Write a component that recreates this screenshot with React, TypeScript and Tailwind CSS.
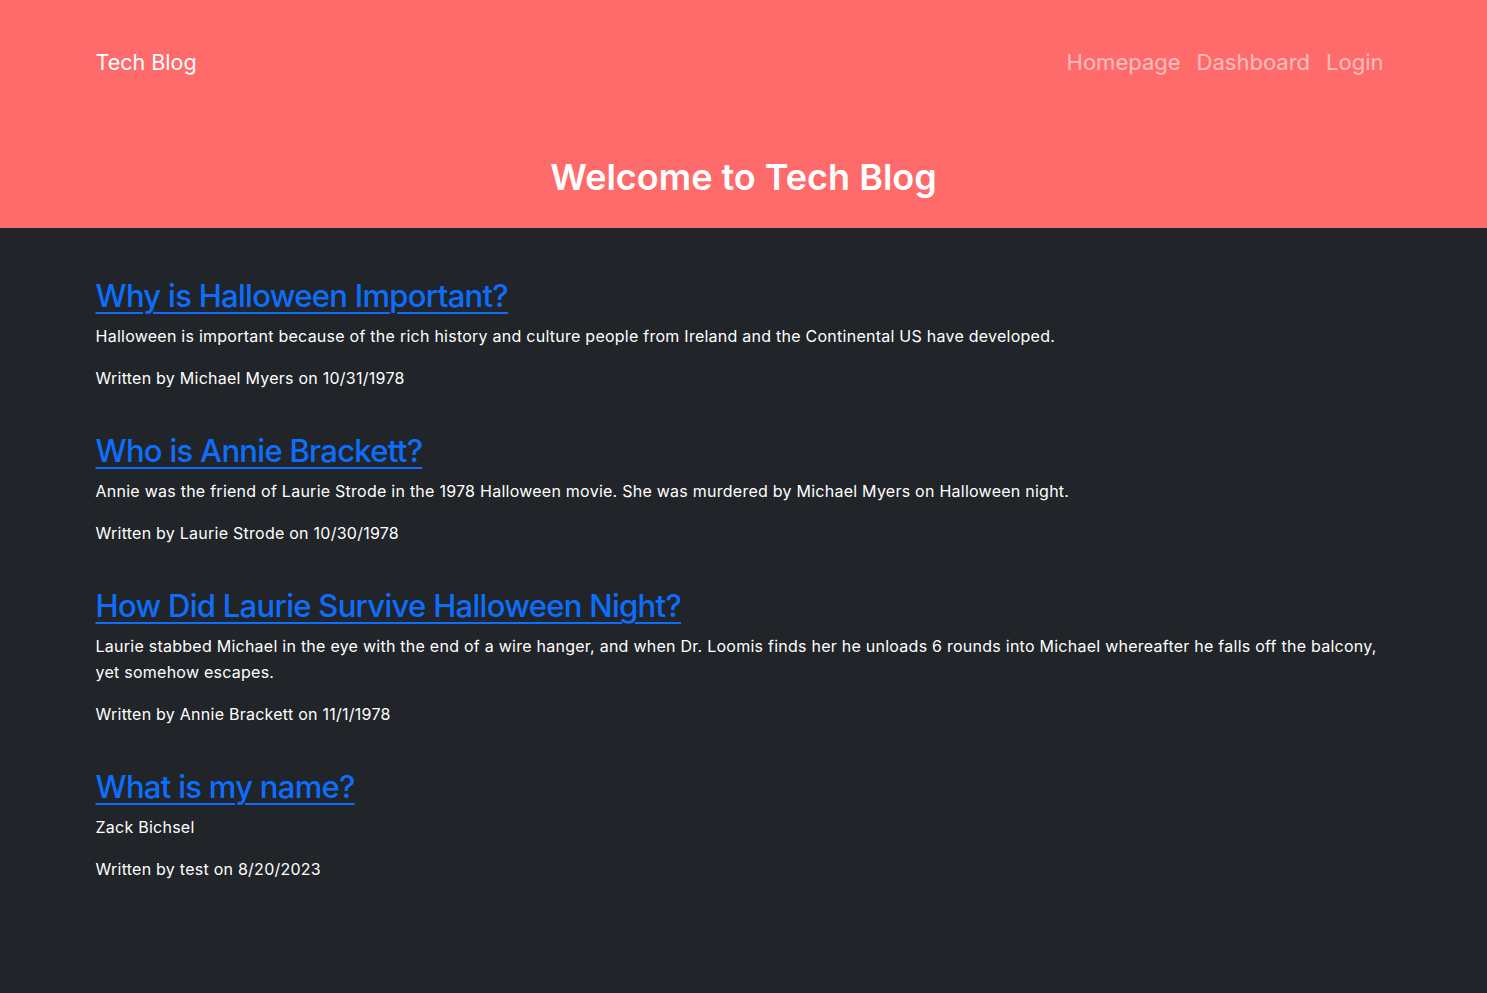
const posts = [
  {
    title: "Why is Halloween Important?",
    body: "Halloween is important because of the rich history and culture people from Ireland and the Continental US have developed.",
    author: "Michael Myers",
    date: "10/31/1978",
  },
  {
    title: "Who is Annie Brackett?",
    body: "Annie was the friend of Laurie Strode in the 1978 Halloween movie. She was murdered by Michael Myers on Halloween night.",
    author: "Laurie Strode",
    date: "10/30/1978",
  },
  {
    title: "How Did Laurie Survive Halloween Night?",
    body: "Laurie stabbed Michael in the eye with the end of a wire hanger, and when Dr. Loomis finds her he unloads 6 rounds into Michael whereafter he falls off the balcony, yet somehow escapes.",
    author: "Annie Brackett",
    date: "11/1/1978",
  },
  {
    title: "What is my name?",
    body: "Zack Bichsel",
    author: "test",
    date: "8/20/2023",
  },
];

function Header() {
  return (
    <header className="bg-[#ff6b6b] text-white">
      <nav className="mx-auto max-w-[1320px] px-3 h-[124px] flex justify-between items-center">
        <a href="#" className="text-[21.5px] leading-[30px]">
          Tech Blog
        </a>
        <div className="flex">
          <a href="#" className="px-2 text-[22px] leading-[30px] text-white/55">
            Homepage
          </a>
          <a href="#" className="px-2 text-[22px] leading-[30px] text-white/55">
            Dashboard
          </a>
          <a href="#" className="px-2 text-[22px] leading-[30px] text-white/55">
            Login
          </a>
        </div>
      </nav>
      <h1 className="text-center text-[36px] leading-[48px] font-semibold pt-[29px] pb-[27px]">
        Welcome to Tech Blog
      </h1>
    </header>
  );
}

function App() {
  return (
    <div className="min-h-[993px] bg-[#212529] font-['Inter',sans-serif]">
      <Header />
      <main className="mx-auto max-w-[1320px] px-3 pt-[49px] pb-16 text-white">
        {posts.map((post) => (
          <article key={post.title} className="mb-[42px]">
            <h2 className="text-[31px] leading-[38px] font-medium tracking-[-0.7px]">
              <a href="#" className="text-[#0d6efd] underline underline-offset-[5px] decoration-2">
                {post.title}
              </a>
            </h2>
            <p className="mt-[8px] text-base leading-[26px] tracking-[0.25px]">{post.body}</p>
            <p className="mt-[17px] text-base leading-[24px] tracking-[0.25px]">
              Written by {post.author} on {post.date}
            </p>
          </article>
        ))}
      </main>
    </div>
  );
}

export default App;
